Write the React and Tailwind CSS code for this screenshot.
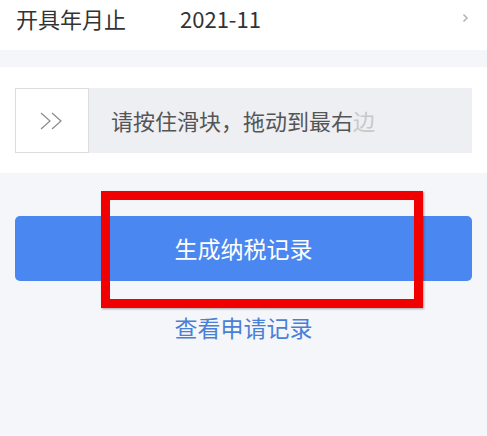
import React from "react";

const font = { fontFamily: '"Noto Sans CJK SC", "Noto Sans", sans-serif' };

export default function App() {
  return (
    <div
      className="relative h-[436px] w-[487px] overflow-hidden bg-[#f5f6fa]"
      style={font}
    >
      {/* date row */}
      <div className="flex h-[50px] items-start bg-white pl-4 pr-[18px] pt-[5px]">
        <span className="w-[164px] text-[22px] leading-[26px] text-[#333]">开具年月止</span>
        <span className="flex-1 text-[22px] leading-[26px] text-[#333]">2021-11</span>
        <svg width="7" height="10" viewBox="0 0 7 10" className="mt-[8px]">
          <path d="M1.5 1.5 L5 5 L1.5 8.5" fill="none" stroke="#b5b5b5" strokeWidth="1.6" />
        </svg>
      </div>

      <div className="h-[17px]" />

      {/* slider */}
      <div className="bg-white px-[15px] pb-[20px] pt-[21px]">
        <div className="flex h-[65px] bg-[#eeeff3]">
          <div className="flex w-[74px] items-center justify-center border border-[#dcdcdc] bg-white">
            <svg width="26" height="20" viewBox="0 0 26 20">
              <path d="M2 2 L11 10 L2 18 M13 2 L22 10 L13 18" fill="none" stroke="#8a8a8a" strokeWidth="1.2" />
            </svg>
          </div>
          <div className="flex items-center pl-[22px] text-[22px] text-[#555]">
            请按住滑块，拖动到最右<span className="text-[#c8c8c8]">边</span>
          </div>
        </div>
      </div>

      {/* actions */}
      <div className="px-[15px] pt-[43px]">
        <div className="flex h-[65px] items-center justify-center rounded-[5px] bg-[#4a87f0] text-[23px] text-white">
          生成纳税记录
        </div>
        <div className="mt-[35px] text-center text-[23px] leading-none text-[#4a7fd6]">
          查看申请记录
        </div>
      </div>

      {/* red annotation box */}
      <div className="absolute left-[101px] top-[191px] h-[117px] w-[322px] border-[9px] border-[#f00000] shadow-[1px_1px_2px_rgba(0,0,0,0.35)]" />
    </div>
  );
}
